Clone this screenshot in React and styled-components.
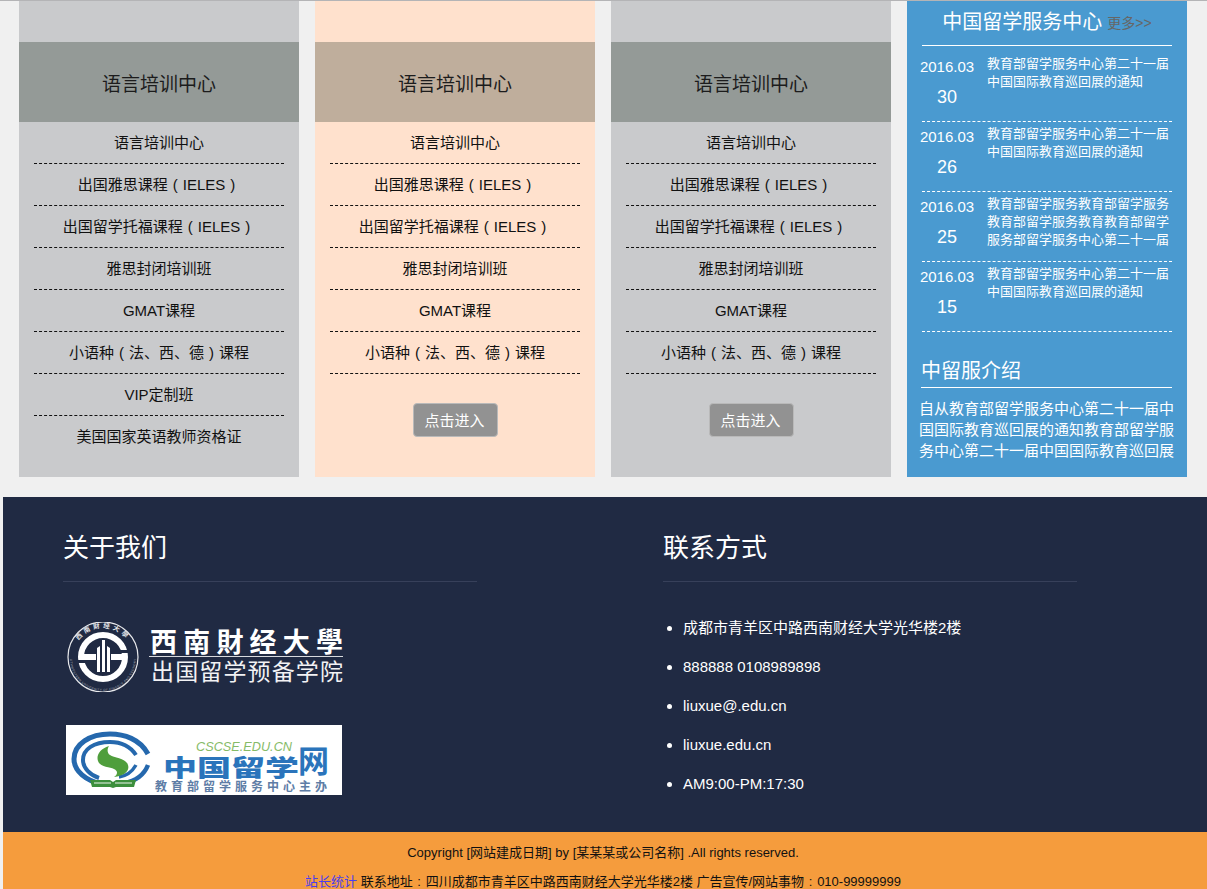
import React from "react";
import styled, { createGlobalStyle } from "styled-components";

const Global = createGlobalStyle`
  html, body { margin: 0; padding: 0; background: #f0f0f0; }
  body { font-family: "Liberation Sans", "Noto Sans CJK SC", Arial, sans-serif; color: #111; overflow: hidden; }
  * { box-sizing: border-box; }
`;

const Page = styled.div`
  width: 1207px;
  height: 889px;
  border-top: 1px solid #b4b4b6;
  overflow: hidden;
`;
const Columns = styled.div`
  display: flex;
  gap: 16px;
  padding: 0 20px 0 19px;
  height: 476px;
`;
const Card = styled.section`
  width: 280px;
  padding-top: 41px;
  background: ${(p) => (p.$warm ? "#ffe1cd" : "#c9cacc")};
`;
const CardHead = styled.h3`
  margin: 0;
  height: 80px;
  display: flex;
  align-items: center;
  justify-content: center;
  font-size: 19px;
  font-weight: 400;
  color: #1c1c1c;
  background: ${(p) => (p.$warm ? "#bfae9c" : "#949a97")};
`;
const CourseList = styled.ul`
  list-style: none;
  margin: 0;
  padding: 0 15px;
`;
const Course = styled.li`
  height: 42px;
  line-height: 41px;
  text-align: center;
  font-size: 15px;
  color: #111;
  border-bottom: 1px dashed #111;
  &:last-child { border-bottom: ${(p) => (p.$open ? "none" : "1px dashed #111")}; }
`;
const FullWidth = styled.span`
  display: inline-block;
  width: 1em;
  text-align: center;
`;
const EnterRow = styled.div`
  display: flex;
  justify-content: center;
  margin-top: 29px;
`;
const EnterButton = styled.button`
  width: 85px;
  height: 34px;
  padding: 0 1px 2px 0;
  border: 1px solid #b9b9b9;
  border-radius: 4px;
  background: #929292;
  color: #fff;
  font: 15px "Liberation Sans", "Noto Sans CJK SC", sans-serif;
`;
const Side = styled.aside`
  width: 280px;
  padding: 0 15px;
  background: #4a9ad0;
  color: #fff;
`;
const SideHead = styled.div`
  height: 45px;
  padding-bottom: 5px;
  border-bottom: 1px solid #fff;
  display: flex;
  align-items: center;
  justify-content: center;
  gap: 5px;
  font-size: 20px;
`;
const More = styled.span`
  font-size: 14px;
  color: #666;
  padding-top: 3px;
`;
const NewsList = styled.div`
  padding-top: 6px;
`;
const NewsItem = styled.div`
  height: 70px;
  display: flex;
  border-bottom: 1px dashed #fff;
`;
const DateBox = styled.div`
  width: 50px;
  flex: none;
  display: flex;
  flex-direction: column;
  align-items: center;
  white-space: nowrap;
`;
const Month = styled.div`
  font-size: 15px;
  line-height: 18px;
  margin-top: 6px;
`;
const Day = styled.div`
  font-size: 18px;
  line-height: 22px;
  margin-top: 10px;
`;
const NewsText = styled.div`
  margin-left: 15px;
  width: 185px;
  font-size: 13px;
  line-height: 18px;
  margin-top: 3px;
`;
const IntroTitle = styled.h3`
  margin: 21px 0 0 -1px;
  height: 35px;
  line-height: 36px;
  font-size: 20px;
  font-weight: 400;
  border-bottom: 1px solid #fff;
`;
const IntroText = styled.p`
  margin: 10px -2px 0 -3px;
  font-size: 15px;
  line-height: 21px;
`;
const Footer = styled.footer`
  margin: 20px 0 0 3px;
  height: 335px;
  background: #202a43;
  color: #fff;
  display: flex;
`;
const FooterCol = styled.div`
  width: 600px;
  padding: 30px 0 0 60px;
`;
const FooterTitle = styled.h2`
  margin: 0;
  width: 414px;
  height: 55px;
  line-height: 42px;
  font-size: 26px;
  font-weight: 400;
  border-bottom: 1px solid #37405a;
`;
const LogoStack = styled.div`
  display: flex;
  flex-direction: column;
  gap: 33px;
  padding: 40px 0 0 3px;
`;
const ContactList = styled.ul`
  margin: 26px 0 0;
  padding: 0 0 0 20px;
`;
const Contact = styled.li`
  height: 39px;
  line-height: 39px;
  font-size: 15px;
`;
const Copy = styled.div`
  margin-left: 3px;
  height: 57px;
  padding: 7px 4px 0 0;
  background: #f59c3d;
  text-align: center;
  font-size: 13px;
  color: #111;
`;
const CopyLine = styled.p`
  margin: 0;
  line-height: 28px;
  &:last-child { padding-top: 1px; }
`;
const StatLink = styled.a`
  color: #4a3df0;
`;

const wide = { "（": "(", "）": ")", "：": ":" };
const withWidePunct = (text) =>
  text.split(/([（）：])/).map((part, i) =>
    wide[part] ? <FullWidth key={i}>{wide[part]}</FullWidth> : part
  );

const SwufeLogo = () => (
  <svg width="278" height="70" viewBox="0 0 278 70" style={{ display: "block" }}>
    <defs>
      <path id="sealTop" d="M7 36a30 30 0 0 1 60 0" />
      <path id="sealBottom" d="M4 36a33 33 0 0 0 66 0" />
    </defs>
    <circle cx="37" cy="35" r="35" fill="none" stroke="#e8e9ec" strokeWidth="1.2" />
    <text fill="#e4e6ea" fontSize="6.5" fontWeight="700" fontFamily="Noto Sans CJK TC, sans-serif">
      <textPath href="#sealTop" startOffset="50%" textAnchor="middle" letterSpacing="3">西南財经大學</textPath>
    </text>
    <text fill="#aeb2bd" fontSize="3" fontFamily="Liberation Sans, sans-serif">
      <textPath href="#sealBottom" startOffset="50%" textAnchor="middle" letterSpacing="0.45">SOUTHWESTERN UNIVERSITY OF FINANCE AND ECONOMICS</textPath>
    </text>
    <circle cx="37" cy="35" r="22" fill="none" stroke="#fff" strokeWidth="6" />
    <path d="M12 38h19v3H12zM43 28h20v3H43z" fill="#202a43" />
    <path d="M15 32h15v6H15zM45 32h14v6H45z" fill="#fff" />
    <path d="M31 50V26l3-2v26zM36 50V18h3v32zM41 50V24l3 2v24z" fill="#fff" />
    <text x="84" y="30" fill="#fff" fontSize="27" fontWeight="700" textLength="193" lengthAdjust="spacing" fontFamily="Noto Sans CJK TC, sans-serif">西南財经大學</text>
    <rect x="83" y="34" width="194" height="1" fill="#d8dade" />
    <text x="85" y="58" fill="#f2f2f4" fontSize="23" fontWeight="400" textLength="192" lengthAdjust="spacing" fontFamily="Noto Sans CJK SC, sans-serif">出国留学预备学院</text>
  </svg>
);

const CscseLogo = () => (
  <svg width="276" height="70" viewBox="0 0 276 70" style={{ display: "block", background: "#fff" }}>
    <g fill="none" stroke="#2568ad">
      <path d="M82 29C74 14 58 9 44 9 24 9 8 19 8 34c0 12 12 22 28 25" strokeWidth="5" />
      <path d="M70 30C64 21 54 17 44 17 28 17 17 24 17 35c0 8 7 15 16 18" strokeWidth="4" />
      <path d="M82 40c-4 10-12 16-24 18" strokeWidth="4.5" />
      <path d="M70 40c-4 7-10 11-17 12" strokeWidth="3.5" />
    </g>
    <path d="M43 21C34 24 30 30 32 36c2 6 12 6 16 8 4 2 4 5 0 8 10-1 16-6 14-12-2-7-14-7-18-10-3-2-3-6-1-9z" fill="#4f9e3c" />
    <path d="M24 55h20l3 2 3-2h20l-2 7H50l-3 1-3-1H26z" fill="#3c8f3c" />
    <path d="M28 58h17M49 58h17" stroke="#fff" strokeWidth="0.9" />
    <text x="130" y="26" fill="#86bb67" fontSize="12" fontStyle="italic" textLength="96" lengthAdjust="spacingAndGlyphs" fontFamily="Liberation Sans, sans-serif">CSCSE.EDU.CN</text>
    <text x="97" y="51" fill="#2a74bb" fontSize="23" fontWeight="900" textLength="136" lengthAdjust="spacingAndGlyphs" fontFamily="Noto Sans CJK SC, sans-serif">中国留学</text>
    <text x="232" y="47" fill="#2a74bb" fontSize="31" fontWeight="700" fontFamily="Noto Sans CJK SC, sans-serif">网</text>
    <text x="89" y="66" fill="#5e7da6" fontSize="12" fontWeight="700" textLength="172" lengthAdjust="spacing" fontFamily="Noto Sans CJK SC, sans-serif">教育部留学服务中心主办</text>
  </svg>
);

const fullCourses = ["语言培训中心", "出国雅思课程（IELES）", "出国留学托福课程（IELES）", "雅思封闭培训班", "GMAT课程", "小语种（法、西、德）课程", "VIP定制班", "美国国家英语教师资格证"];
const shortCourses = fullCourses.slice(0, 6);

const news = [
  { d: "30", t: "教育部留学服务中心第二十一届中国国际教育巡回展的通知" },
  { d: "26", t: "教育部留学服务中心第二十一届中国国际教育巡回展的通知" },
  { d: "25", t: "教育部留学服务教育部留学服务教育部留学服务教育教育部留学服务部留学服务中心第二十一届" },
  { d: "15", t: "教育部留学服务中心第二十一届中国国际教育巡回展的通知" },
];

const contacts = ["成都市青羊区中路西南财经大学光华楼2楼", "888888 0108989898", "liuxue@.edu.cn", "liuxue.edu.cn", "AM9:00-PM:17:30"];

const CourseCard = ({ warm, courses, button }) => (
  <Card $warm={warm}>
    <CardHead $warm={warm}>语言培训中心</CardHead>
    <CourseList>
      {courses.map((c) => (
        <Course key={c} $open={!button}>{withWidePunct(c)}</Course>
      ))}
    </CourseList>
    {button && (
      <EnterRow>
        <EnterButton>点击进入</EnterButton>
      </EnterRow>
    )}
  </Card>
);

export default function App() {
  return (
    <Page>
      <Global />
      <Columns>
        <CourseCard courses={fullCourses} />
        <CourseCard warm courses={shortCourses} button />
        <CourseCard courses={shortCourses} button />
        <Side>
          <SideHead>中国留学服务中心<More>更多&gt;&gt;</More></SideHead>
          <NewsList>
            {news.map((n) => (
              <NewsItem key={n.d}>
                <DateBox>
                  <Month>2016.03</Month>
                  <Day>{n.d}</Day>
                </DateBox>
                <NewsText>{n.t}</NewsText>
              </NewsItem>
            ))}
          </NewsList>
          <IntroTitle>中留服介绍</IntroTitle>
          <IntroText>自从教育部留学服务中心第二十一届中国国际教育巡回展的通知教育部留学服务中心第二十一届中国国际教育巡回展</IntroText>
        </Side>
      </Columns>
      <Footer>
        <FooterCol>
          <FooterTitle>关于我们</FooterTitle>
          <LogoStack>
            <SwufeLogo />
            <CscseLogo />
          </LogoStack>
        </FooterCol>
        <FooterCol>
          <FooterTitle>联系方式</FooterTitle>
          <ContactList>
            {contacts.map((c) => (
              <Contact key={c}>{c}</Contact>
            ))}
          </ContactList>
        </FooterCol>
      </Footer>
      <Copy>
        <CopyLine>Copyright [网站建成日期] by [某某某或公司名称] .All rights reserved.</CopyLine>
        <CopyLine><StatLink>站长统计</StatLink> {withWidePunct("联系地址：四川成都市青羊区中路西南财经大学光华楼2楼 广告宣传/网站事物：010-99999999")}</CopyLine>
      </Copy>
    </Page>
  );
}
